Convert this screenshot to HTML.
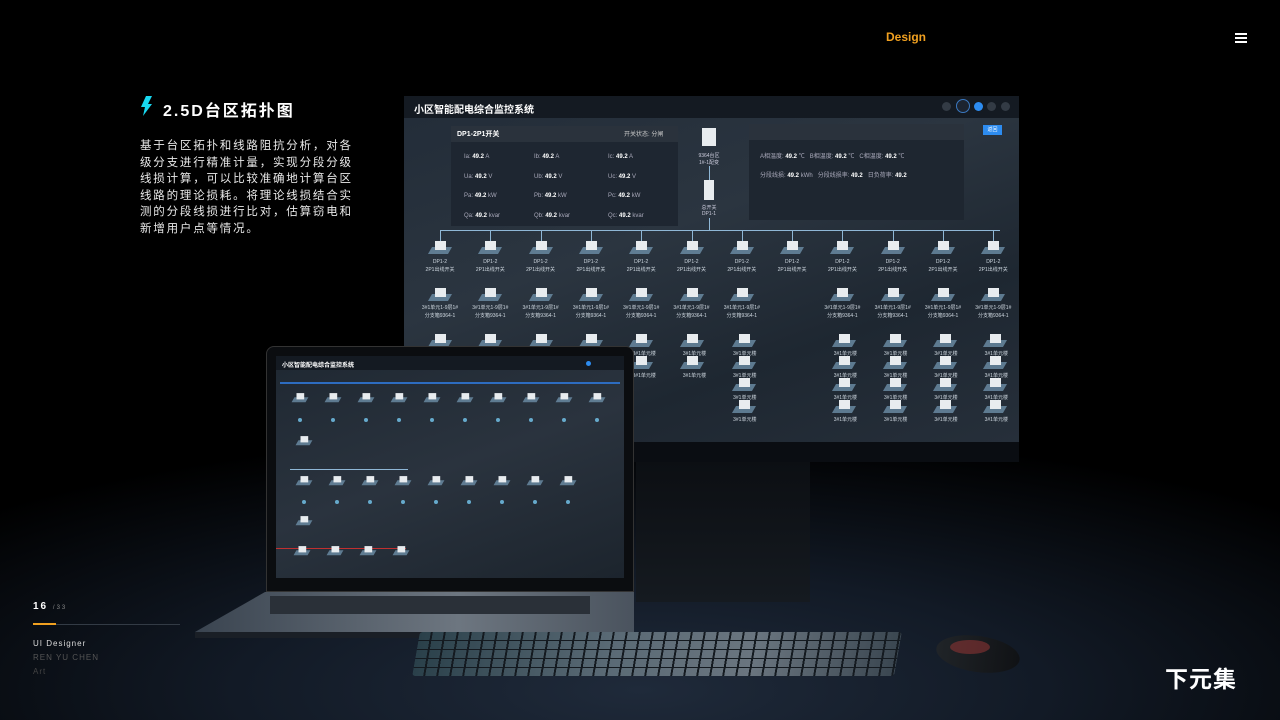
<!DOCTYPE html>
<html><head><meta charset="utf-8"><style>
*{margin:0;padding:0;box-sizing:border-box}
body{width:1280px;height:720px;overflow:hidden;background:#000;font-family:"Liberation Sans","Noto Sans CJK SC",sans-serif;color:#fff;position:relative}
.abs{position:absolute}
.bg{left:0;top:0;width:1280px;height:720px;background:radial-gradient(ellipse 900px 260px at 640px 690px,#1f2a3a 0%,#121a26 45%,#000 100%)}
.n{position:absolute;width:20px;height:14px}
.n i{position:absolute;left:0;top:6px;width:20px;height:7px;background:#6d8fa8;transform:skewX(-30deg);opacity:.8}
.n b{position:absolute;left:5px;top:0;width:11px;height:9px;background:#e8ecef}
.lbl{position:absolute;font-size:5px;color:#cfd8e0;text-align:center;width:50px;line-height:8px}
.vl{position:absolute;width:1px;background:#8fb7d6}
.cell{font-size:6px;color:#aab}
</style></head><body>
<div class="abs bg"></div>
<div class="abs" style="left:886px;top:30px;font-size:12px;font-weight:bold;color:#f0a020">Design</div>
<div class="abs" style="left:1235px;top:33px;width:12px;height:2px;background:#fff;box-shadow:0 4px 0 #fff,0 8px 0 #fff"></div>
<svg class="abs" style="left:140px;top:96px" width="14" height="20"><polygon points="6,0 12,0 8,8 12,8 3,20 5,11 1,11" fill="#18d8f0"/></svg>
<div class="abs" style="left:163px;top:97px;font-size:16px;font-weight:bold;letter-spacing:2px">2.5D台区拓扑图</div>
<div class="abs" style="left:140px;top:138px;width:222px;font-size:11.5px;line-height:16.5px;letter-spacing:1.8px;color:#e8e8e8">基于台区拓扑和线路阻抗分析，对各级分支进行精准计量，实现分段分级线损计算，可以比较准确地计算台区线路的理论损耗。将理论线损结合实测的分段线损进行比对，估算窃电和新增用户点等情况。</div>

<!-- monitor stand -->
<div class="abs" style="left:636px;top:462px;width:174px;height:140px;background:linear-gradient(180deg,#0c0f13,#151a20)"></div>
<!-- monitor -->
<div class="abs" style="left:404px;top:96px;width:615px;height:366px;background:#0a0d12"></div>
<div class="abs" style="left:404px;top:96px;width:615px;height:346px;background:linear-gradient(160deg,#222c38,#2b3540 40%,#1e2731 70%,#262f3a);overflow:hidden">
 <div class="abs" style="left:0;top:0;width:615px;height:22px;background:#141a22"></div>
 <div class="abs" style="left:10px;top:5px;font-size:10px;font-weight:bold">小区智能配电综合监控系统</div>
 <div class="abs" style="left:538px;top:6px;width:9px;height:9px;border-radius:50%;background:#333b45"></div>
 <div class="abs" style="left:552px;top:3px;width:14px;height:14px;border-radius:50%;background:#1c2430;border:1px solid #3a78c0"></div>
 <div class="abs" style="left:570px;top:6px;width:9px;height:9px;border-radius:50%;background:#2d8cf0"></div>
 <div class="abs" style="left:583px;top:6px;width:9px;height:9px;border-radius:50%;background:#333b45"></div>
 <div class="abs" style="left:597px;top:6px;width:9px;height:9px;border-radius:50%;background:#333b45"></div>
 <div class="abs" style="left:47px;top:30px;width:227px;height:100px;background:#1e2630;opacity:.95"></div>
 <div class="abs" style="left:47px;top:30px;width:227px;height:16px;background:#2a323c"></div>
 <div class="abs" style="left:53px;top:33px;font-size:7px;font-weight:bold">DP1-2P1开关</div>
 <div class="abs" style="left:220px;top:33px;font-size:6px;color:#ccc">开关状态: 分闸</div>
 <div class="abs cell" style="left:60px;top:52px;line-height:19.5px">Ia: <b style="color:#fff">49.2</b> A<br>Ua: <b style="color:#fff">49.2</b> V<br>Pa: <b style="color:#fff">49.2</b> kW<br>Qa: <b style="color:#fff">49.2</b> kvar</div>
 <div class="abs cell" style="left:130px;top:52px;line-height:19.5px">Ib: <b style="color:#fff">49.2</b> A<br>Ub: <b style="color:#fff">49.2</b> V<br>Pb: <b style="color:#fff">49.2</b> kW<br>Qb: <b style="color:#fff">49.2</b> kvar</div>
 <div class="abs cell" style="left:204px;top:52px;line-height:19.5px">Ic: <b style="color:#fff">49.2</b> A<br>Uc: <b style="color:#fff">49.2</b> V<br>Pc: <b style="color:#fff">49.2</b> kW<br>Qc: <b style="color:#fff">49.2</b> kvar</div>
 <div class="abs" style="left:345px;top:28px;width:215px;height:96px;background:#1e2630"></div>
 <div class="abs" style="left:345px;top:28px;width:215px;height:16px;background:#2a323c"></div>
 <div class="abs cell" style="left:356px;top:52px;line-height:19px">A相温度: <b style="color:#fff">49.2</b> ℃ &nbsp; B相温度: <b style="color:#fff">49.2</b> ℃ &nbsp; C相温度: <b style="color:#fff">49.2</b> ℃<br>分段线损: <b style="color:#fff">49.2</b> kWh &nbsp; 分段线损率: <b style="color:#fff">49.2</b> &nbsp; 日负荷率: <b style="color:#fff">49.2</b></div>
 <div class="abs" style="left:579px;top:29px;width:19px;height:10px;background:#2d8cf0;font-size:5px;text-align:center;line-height:10px">返回</div>
 <div class="abs" style="left:298px;top:32px;width:14px;height:18px;background:#e8ecef"></div>
 <div class="abs" style="left:290px;top:56px;font-size:5px;color:#ccd;text-align:center;width:30px">9364台区<br>1#-1配变</div>
 <div class="vl" style="left:305px;top:70px;height:16px"></div>
 <div class="abs" style="left:300px;top:84px;width:10px;height:20px;background:#e8ecef"></div>
 <div class="abs" style="left:290px;top:108px;font-size:5px;color:#ccd;text-align:center;width:30px">总开关<br>DP1-1</div>
 <div class="vl" style="left:305px;top:122px;height:12px"></div>
 <div class="abs" style="left:36px;top:134px;width:560px;height:1px;background:#8fb7d6"></div>
</div>
<div id="mon" class="abs" style="left:404px;top:96px;width:615px;height:346px"></div>

<!-- laptop -->
<div class="abs" style="left:266px;top:346px;width:368px;height:246px;background:#0b0d10;border-radius:8px 8px 0 0;border:1px solid #333"></div>
<div class="abs" style="left:276px;top:356px;width:348px;height:222px;background:linear-gradient(160deg,#1f2832,#2a333e 50%,#1c242d)">
 <div class="abs" style="left:0;top:0;width:348px;height:14px;background:#141a22"></div>
 <div class="abs" style="left:6px;top:4px;font-size:6px;font-weight:bold">小区智能配电综合监控系统</div>
 <div class="abs" style="left:310px;top:5px;width:5px;height:5px;border-radius:50%;background:#2d8cf0"></div>
 <div class="abs" style="left:4px;top:26px;width:340px;height:2px;background:#2d6cc0"></div>
 <div class="abs" style="left:14px;top:113px;width:118px;height:1px;background:#8fb7d6"></div>
 <div class="abs" style="left:0px;top:192px;width:130px;height:1px;background:#c03030"></div>
</div>
<div id="lap" class="abs" style="left:276px;top:356px;width:348px;height:222px"></div>
<div class="abs" style="left:195px;top:592px;width:439px;height:40px;background:linear-gradient(90deg,#3a4450,#6d7680 60%,#4a535e);clip-path:polygon(70px 0,439px 0,439px 40px,0 40px)"></div>
<div class="abs" style="left:270px;top:596px;width:320px;height:18px;background:#2a3038"></div>
<div class="abs" style="left:195px;top:632px;width:439px;height:6px;background:#1a1f26"></div>
<!-- keyboard -->
<div class="abs" style="left:416px;top:632px;width:482px;height:44px;transform:skewX(-10deg);border-radius:3px;
 background-image:repeating-linear-gradient(90deg,transparent 0 11px,#141a20 11px 13px),repeating-linear-gradient(0deg,transparent 0 8px,#141a20 8px 9px),linear-gradient(90deg,#2a404a,#5a6a75 40%,#6a757f 70%,#3a4650)"></div>
<div class="abs" style="left:936px;top:636px;width:84px;height:36px;border-radius:50%;background:linear-gradient(90deg,#202428,#101215);transform:rotate(8deg)"></div>
<div class="abs" style="left:950px;top:640px;width:40px;height:14px;border-radius:50%;background:#8a3434;opacity:.6"></div>

<div class="abs" style="left:33px;top:601px;font-size:10px;font-weight:bold;letter-spacing:2px">16 <span style="font-size:6px;color:#888;font-weight:normal">/33</span></div>
<div class="abs" style="left:33px;top:624px;width:147px;height:1px;background:#333b45"></div>
<div class="abs" style="left:33px;top:623px;width:23px;height:2px;background:#f0a020"></div>
<div class="abs" style="left:33px;top:639px;font-size:8px;letter-spacing:1px;color:#ddd">UI Designer</div>
<div class="abs" style="left:33px;top:653px;font-size:8px;letter-spacing:1px;color:#555">REN YU CHEN</div>
<div class="abs" style="left:33px;top:667px;font-size:8px;letter-spacing:1px;color:#444">Art</div>
<div class="abs" style="left:1165px;top:660px;font-size:23px;font-weight:bold;letter-spacing:1px">下元集</div>
<script>
var m=document.getElementById('mon'),h='';
for(var k=0;k<12;k++){var x=26+k*50.3;
h+='<div class="vl" style="left:'+(x+10)+'px;top:135px;height:10px"></div><div class="n" style="left:'+x+'px;top:145px"><i></i><b></b></div><div class="lbl" style="left:'+(x-15)+'px;top:162px">DP1-2<br>2P1出线开关</div>';
if(k!=7){h+='<div class="n" style="left:'+x+'px;top:192px"><i></i><b></b></div><div class="lbl" style="left:'+(x-15)+'px;top:208px">3#1单元1-9层1#<br>分支箱9364-1</div>';
for(var r=0;r<(k<6?2:4);r++)h+='<div class="n" style="left:'+(x+(k>5?2:0))+'px;top:'+(238+r*22)+'px"><i></i><b></b></div><div class="lbl" style="left:'+(x-12)+'px;top:'+(254+r*22)+'px">3#1单元楼</div>';}}
m.innerHTML=h;
var l=document.getElementById('lap');h='';
for(k=0;k<10;k++){x=14+k*33;h+='<div class="n" style="left:'+x+'px;top:35px;transform:scale(.7)"><i></i><b></b></div><div class="abs" style="left:'+(x+8)+'px;top:62px;width:4px;height:4px;border-radius:50%;background:#6ac"></div>';}
for(k=0;k<9;k++){x=18+k*33;h+='<div class="n" style="left:'+x+'px;top:118px;transform:scale(.7)"><i></i><b></b></div><div class="abs" style="left:'+(x+8)+'px;top:144px;width:4px;height:4px;border-radius:50%;background:#6ac"></div>';}
for(k=0;k<4;k++){x=16+k*33;h+='<div class="n" style="left:'+x+'px;top:188px;transform:scale(.7)"><i></i><b></b></div>';}
h+='<div class="n" style="left:18px;top:158px;transform:scale(.7)"><i></i><b></b></div><div class="n" style="left:18px;top:78px;transform:scale(.7)"><i></i><b></b></div>';
l.innerHTML=h;
</script>
</body></html>
